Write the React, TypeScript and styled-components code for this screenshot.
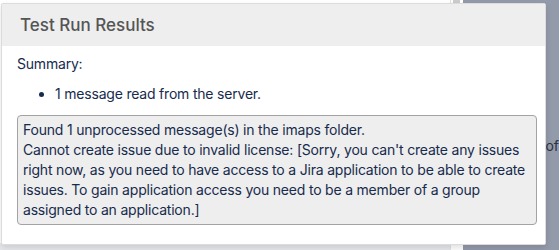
import * as React from 'react';
import styled, { createGlobalStyle } from 'styled-components';

const GlobalStyle = createGlobalStyle`
  html, body {
    margin: 0;
    padding: 0;
    background: #ffffff;
  }
  body {
    font-family: Inter, "Noto Sans", "Liberation Sans", sans-serif;
  }
`;

const Page = styled.div`
  position: relative;
  display: flex;
  width: 559px;
  height: 250px;
  overflow: hidden;
`;

const BackPane = styled.div`
  display: flex;
  flex-direction: column;
  justify-content: flex-end;
  width: 452px;
  background: #ffffff;
`;

const BackFooter = styled.div`
  height: 7px;
  background: #e6e8ec;
`;

const Scrollbar = styled.div`
  width: 13px;
  border-left: 1px solid #e2e2e2;
  background: #ffffff;
  display: flex;
  justify-content: center;
`;

const ScrollThumb = styled.div`
  width: 7px;
  height: 20px;
  background: #cccccc;
`;

const Overlay = styled.div`
  flex: 1;
  background: #939aaa;
  padding: 135px 0 0 82px;
`;

const OverlayText = styled.span`
  font-size: 14px;
  line-height: 20px;
  color: #2b3240;
`;

const Dialog = styled.div`
  position: absolute;
  left: 1px;
  top: 3px;
  width: 543px;
  height: 240px;
  background: #ffffff;
  border: 1px solid #dcdcdc;
  border-radius: 2px;
  box-shadow: 0 3px 6px rgba(0, 0, 0, 0.12);
  display: flex;
  flex-direction: column;
  color: #172b4d;
`;

const Header = styled.div`
  height: 42px;
  background: #eeeeee;
  display: flex;
  align-items: center;
  padding-left: 18px;
`;

const Title = styled.h2`
  margin: 0;
  font-size: 17px;
  font-weight: 500;
  color: #555555;
`;

const Body = styled.div`
  padding: 8px 8px 0 15px;
  font-size: 14px;
  line-height: 20px;
  letter-spacing: -0.2px;
`;

const Label = styled.div`
  margin: 0;
`;

const List = styled.ul`
  margin: 10px 0 0 0;
  padding-left: 38px;
`;

const Output = styled.pre`
  margin: 11px 0 0 0;
  padding: 4px 5px;
  background: #eeeeee;
  border: 1px solid #a3a3a3;
  border-radius: 4px;
  font-family: inherit;
  font-size: 14px;
  line-height: 20px;
  white-space: pre-wrap;
  color: #172b4d;
`;

const outputText =
  "Found 1 unprocessed message(s) in the imaps folder.\n" +
  "Cannot create issue due to invalid license: [Sorry, you can't create any issues right now, as you need to have access to a Jira application to be able to create issues. To gain application access you need to be a member of a group assigned to an application.]";

export default function App() {
  return (
    <>
      <GlobalStyle />
      <Page>
        <BackPane>
          <BackFooter />
        </BackPane>
        <Scrollbar>
          <ScrollThumb />
        </Scrollbar>
        <Overlay>
          <OverlayText>of</OverlayText>
        </Overlay>
        <Dialog>
          <Header>
            <Title>Test Run Results</Title>
          </Header>
          <Body>
            <Label>Summary:</Label>
            <List>
              <li>1 message read from the server.</li>
            </List>
            <Output>{outputText}</Output>
          </Body>
        </Dialog>
      </Page>
    </>
  );
}
